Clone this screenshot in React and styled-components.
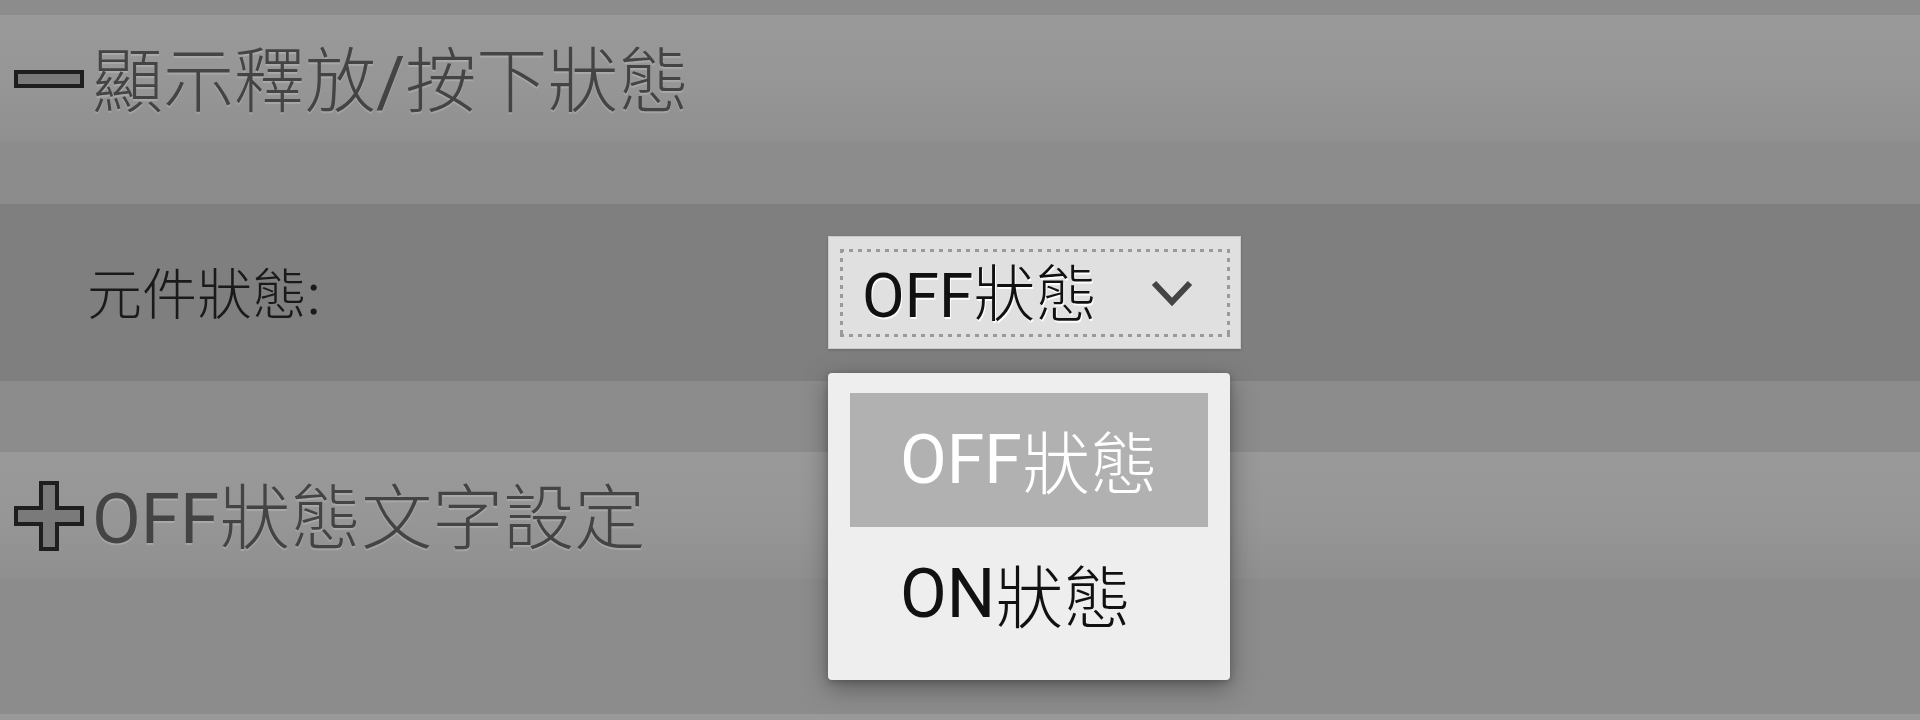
import React from "react";
import styled, { createGlobalStyle } from "styled-components";

const Global = createGlobalStyle`
  html, body { margin: 0; padding: 0; }
  body {
    background: #8c8c8c;
    font-family: Roboto, "Noto Sans CJK TC", "Noto Sans", sans-serif;
  }
`;

const Page = styled.div`
  width: 1920px;
  height: 720px;
  overflow: hidden;
  background: #8c8c8c;
  padding-top: 15px;
  box-sizing: border-box;
  display: flex;
  flex-direction: column;
`;

const SectionHeader = styled.div`
  flex: none;
  height: 127px;
  display: flex;
  align-items: center;
  gap: 8px;
  padding-left: 14px;
  background: linear-gradient(#999999 0%, #969696 55%, #8f8f8f 100%);
`;

const HeaderTitle = styled.span`
  font-size: 71px;
  line-height: 1;
  color: #444444;
  text-shadow: 0 2px 1px rgba(255, 255, 255, 0.18);
  white-space: nowrap;
`;

/* CJK glyphs in the reference are drawn with a much lighter stroke than the Latin ones */
const Han = styled.span`
  font-family: "Noto Sans CJK TC", sans-serif;
  font-weight: ${(p) => p.$weight || 300};
`;

const SectionBody = styled.div`
  flex: none;
  padding: ${(p) => p.$pad || "0"};
  height: ${(p) => p.$height || "auto"};
  box-sizing: border-box;
`;

const Row = styled.div`
  height: 177px;
  background: #7f7f7f;
  display: grid;
  grid-template-columns: 741px auto;
  align-items: center;
  padding-left: 87px;
`;

const Label = styled.span`
  font-size: 55px;
  line-height: 1;
  color: #1a1a1a;
  white-space: nowrap;
`;

const SelectWrap = styled.div`
  position: relative;
  width: 413px;
`;

const SelectBox = styled.div`
  height: 113px;
  box-sizing: border-box;
  background: #e0e0e0;
  border: 1px solid #cacaca;
  box-shadow: 0 1px 3px rgba(0, 0, 0, 0.18);
  padding: 12px 10px 11px 11px;
`;

const FocusRing = styled.div`
  height: 100%;
  box-sizing: border-box;
  display: flex;
  align-items: center;
  justify-content: space-between;
  padding: 0 36px 0 22px;
  background:
    repeating-linear-gradient(90deg, #9a9a9a 0 4px, transparent 4px 9px) left top / 100% 3px no-repeat,
    repeating-linear-gradient(90deg, #9a9a9a 0 4px, transparent 4px 9px) left bottom / 100% 3px no-repeat,
    repeating-linear-gradient(180deg, #9a9a9a 0 4px, transparent 4px 9px) left top / 3px 100% no-repeat,
    repeating-linear-gradient(180deg, #9a9a9a 0 4px, transparent 4px 9px) right top / 3px 100% no-repeat;
`;

const SelectText = styled.span`
  font-size: 62px;
  line-height: 1;
  color: #111;
  text-shadow: 1px 2px 0 rgba(255, 255, 255, 0.9);
  white-space: nowrap;
`;

const Menu = styled.div`
  position: absolute;
  left: 0;
  top: 137px;
  width: 402px;
  box-sizing: border-box;
  background: #eeeeee;
  border-radius: 4px;
  box-shadow: 0 8px 26px rgba(0, 0, 0, 0.35), 0 2px 6px rgba(0, 0, 0, 0.2);
  padding: 20px 22px 19px;
  display: flex;
  flex-direction: column;
  z-index: 10;
`;

const MenuItem = styled.div`
  height: 134px;
  display: flex;
  align-items: center;
  padding-left: 50px;
  background: ${(p) => (p.$active ? "#b1b1b1" : "transparent")};
  color: ${(p) => (p.$active ? "#ffffff" : "#111111")};
  font-size: 68px;
  line-height: 1;
  white-space: nowrap;
`;

const MinusIcon = () => (
  <svg width="70" height="18" viewBox="0 0 70 18" style={{ flex: "none" }}>
    <rect x="2" y="2" width="66" height="14" fill="#7a7a7a" stroke="#1e1e1e" strokeWidth="4" />
  </svg>
);

const PlusIcon = () => (
  <svg width="70" height="70" viewBox="0 0 70 70" style={{ flex: "none" }}>
    <path
      d="M27 2 H43 V27 H68 V43 H43 V68 H27 V43 H2 V27 H27 Z"
      fill="#7a7a7a"
      stroke="#1e1e1e"
      strokeWidth="4"
      strokeLinejoin="miter"
    />
  </svg>
);

const Chevron = () => (
  <svg width="44" height="30" viewBox="0 0 44 30" style={{ flex: "none" }}>
    <path d="M4 5 L22 24 L40 5" fill="none" stroke="#444" strokeWidth="6" />
  </svg>
);

export default function App() {
  return (
    <>
      <Global />
      <Page>
        <SectionHeader>
          <MinusIcon />
          <HeaderTitle>
            <Han>顯示釋放</Han>/<Han>按下狀態</Han>
          </HeaderTitle>
        </SectionHeader>
        <SectionBody $pad="62px 0 71px">
          <Row>
            <Label>
              <Han>元件狀態</Han>:
            </Label>
            <SelectWrap>
              <SelectBox>
                <FocusRing>
                  <SelectText>
                    OFF<Han>狀態</Han>
                  </SelectText>
                  <Chevron />
                </FocusRing>
              </SelectBox>
              <Menu>
                <MenuItem $active>
                  OFF<Han>狀態</Han>
                </MenuItem>
                <MenuItem>
                  ON<Han>狀態</Han>
                </MenuItem>
              </Menu>
            </SelectWrap>
          </Row>
        </SectionBody>
        <SectionHeader>
          <PlusIcon />
          <HeaderTitle>
            OFF<Han>狀態文字設定</Han>
          </HeaderTitle>
        </SectionHeader>
        <SectionBody $height="135px" />
        <SectionHeader />
      </Page>
    </>
  );
}
